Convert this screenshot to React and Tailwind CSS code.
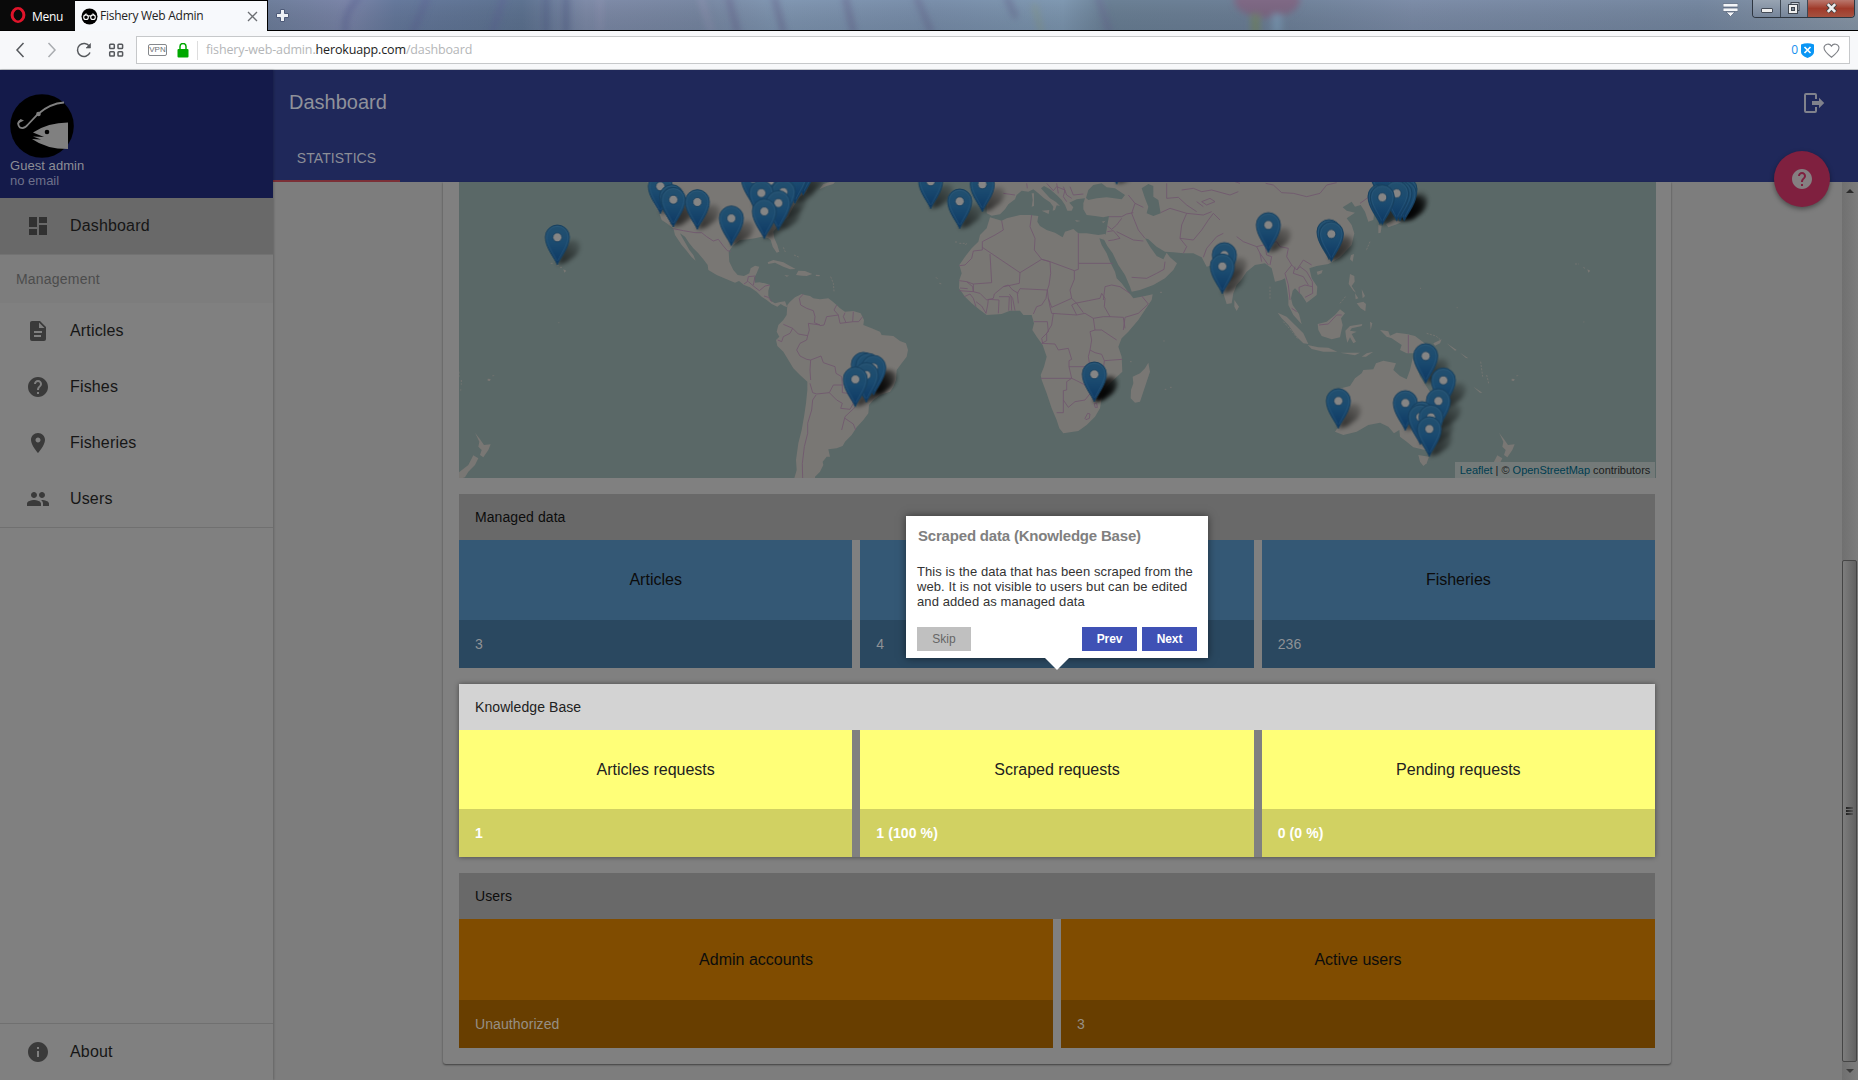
import React from "react";

const SANS = "font-['Liberation_Sans',Arial,sans-serif]";

const PATHS = {
  dashboard: "M3 13h8V3H3v10zm0 8h8v-6H3v6zm10 0h8V11h-8v10zm0-18v6h8V3h-8z",
  article:
    "M13 9h5.5L13 3.5V9M6 2h8l6 6v12a2 2 0 0 1-2 2H6a2 2 0 0 1-2-2V4c0-1.11.89-2 2-2m9 16v-2H8v2h7m1-4v-2H8v2h8z",
  help: "M12 2C6.48 2 2 6.48 2 12s4.48 10 10 10 10-4.48 10-10S17.52 2 12 2zm1 17h-2v-2h2v2zm2.07-7.75l-.9.92C13.45 12.9 13 13.5 13 15h-2v-.5c0-1.1.45-2.1 1.17-2.83l1.24-1.26c.37-.36.59-.86.59-1.41 0-1.1-.9-2-2-2s-2 .9-2 2H8c0-2.21 1.79-4 4-4s4 1.79 4 4c0 .88-.36 1.68-.93 2.25z",
  place:
    "M12 2C8.13 2 5 5.13 5 9c0 5.25 7 13 7 13s7-7.75 7-13c0-3.87-3.13-7-7-7zm0 9.5c-1.38 0-2.5-1.12-2.5-2.5s1.12-2.5 2.5-2.5 2.5 1.12 2.5 2.5-1.12 2.5-2.5 2.5z",
  people:
    "M16 11c1.66 0 2.99-1.34 2.99-3S17.66 5 16 5c-1.66 0-3 1.34-3 3s1.34 3 3 3zm-8 0c1.66 0 2.99-1.34 2.99-3S9.66 5 8 5C6.34 5 5 6.34 5 8s1.34 3 3 3zm0 2c-2.33 0-7 1.17-7 3.5V19h14v-2.5c0-2.33-4.67-3.5-7-3.5zm8 0c-.29 0-.62.02-.97.05 1.16.84 1.97 1.97 1.97 3.45V19h6v-2.5c0-2.33-4.67-3.5-7-3.5z",
  info: "M12 2C6.48 2 2 6.48 2 12s4.48 10 10 10 10-4.48 10-10S17.52 2 12 2zm1 15h-2v-6h2v6zm0-8h-2V7h2v2z",
  logout:
    "M17 17.25V14h-7v-4h7V6.75L22.25 12 17 17.25M13 2a2 2 0 0 1 2 2v4h-2V4H4v16h9v-4h2v4a2 2 0 0 1-2 2H4a2 2 0 0 1-2-2V4a2 2 0 0 1 2-2h9z",
};

function Icon({ name, className }) {
  return (
    <svg viewBox="0 0 24 24" className={className} fill="currentColor">
      <path d={PATHS[name]} />
    </svg>
  );
}

/* ---------- browser chrome ---------- */

function StripBackdrop() {
  return (
    <svg className="absolute inset-0 h-full w-full" viewBox="268 0 1590 30" preserveAspectRatio="none">
      <defs>
        <linearGradient id="strip" gradientUnits="userSpaceOnUse" x1="268" x2="1858" y1="0" y2="0">
          <stop offset="0" stopColor="#6f7f9c" />
          <stop offset="0.05" stopColor="#7b85a8" />
          <stop offset="0.08" stopColor="#66799c" />
          <stop offset="0.16" stopColor="#5e7391" />
          <stop offset="0.2" stopColor="#7f8ba8" />
          <stop offset="0.27" stopColor="#7988a3" />
          <stop offset="0.32" stopColor="#8197b2" />
          <stop offset="0.42" stopColor="#7a8fab" />
          <stop offset="0.5" stopColor="#7f98b1" />
          <stop offset="0.53" stopColor="#6b8095" />
          <stop offset="0.62" stopColor="#6d8097" />
          <stop offset="0.72" stopColor="#7d8da8" />
          <stop offset="0.9" stopColor="#7688a1" />
          <stop offset="1" stopColor="#8a98a8" />
        </linearGradient>
        <linearGradient id="stripShade" x1="0" x2="0" y1="0" y2="1">
          <stop offset="0" stopColor="#000" stopOpacity="0" />
          <stop offset="1" stopColor="#1e2c3c" stopOpacity="0.14" />
        </linearGradient>
        <filter id="soft" x="-20%" y="-20%" width="140%" height="140%">
          <feGaussianBlur stdDeviation="3" />
        </filter>
      </defs>
      <rect x="268" y="0" width="1590" height="30" fill="url(#strip)" />
      <g filter="url(#soft)" fill="none" strokeWidth="6" opacity="0.65">
        <path d="M360 -4Q342 14 346 34M428 -4L412 34M504 -4L492 34" stroke="#5f6796" />
        <path d="M546 -4V34M566 -4V34" stroke="#56648a" />
        <path d="M728 -4L738 34M774 -4L784 34M845 -4L854 34" stroke="#6a6c93" />
        <path d="M916 -4L932 34M1006 -4L1016 18M1098 -4L1110 34" stroke="#6b7094" />
        <path d="M600 -4V34M700 -4L712 34" stroke="#8d93b0" />
        <path d="M1034 4L1042 34" stroke="#869a93" />
      </g>
      <g filter="url(#soft)">
        <ellipse cx="1267" cy="0" rx="33" ry="18" fill="#7f6985" />
        <rect x="1251" y="14" width="9" height="22" fill="#75866f" />
        <rect x="1272" y="14" width="10" height="20" fill="#7c97b2" />
      </g>
      <rect x="268" y="0" width="1590" height="30" fill="url(#stripShade)" />
    </svg>
  );
}

function WindowButtons() {
  return (
    <div className="absolute right-[3px] top-0 flex h-[18px] w-[103px] overflow-hidden rounded-b-[4px] border border-t-0 border-[#2e3640]">
      <div className="flex w-[28px] items-center justify-center border-r border-[#3e4854] bg-gradient-to-b from-[#98a4b2] to-[#76859a]">
        <div className="mt-[4px] h-[5px] w-[12px] rounded-[1px] border border-[#444c57] bg-[#eee]" />
      </div>
      <div className="flex w-[27px] items-center justify-center border-r border-[#3e4854] bg-gradient-to-b from-[#98a4b2] to-[#76859a]">
        <svg className="mb-[2px]" width="14" height="14" viewBox="0 0 14 14" fill="none">
          <rect x="4" y="1.5" width="8" height="8" fill="#c8ced6" stroke="#3f4650" />
          <rect x="1.5" y="3.5" width="9" height="9" fill="#eee" stroke="#3f4650" />
          <rect x="4.5" y="6.5" width="3" height="3" fill="#7d8794" stroke="#3f4650" />
        </svg>
      </div>
      <div className="flex flex-1 items-center justify-center bg-gradient-to-b from-[#b9776d] via-[#a03a2a] to-[#a5513f]">
        <svg className="mb-[2px]" width="13" height="12" viewBox="0 0 13 12">
          <path d="M2.5 2l8 8M10.5 2l-8 8" stroke="#444" strokeWidth="4.4" />
          <path d="M2.8 2.2l7.4 7.6M10.2 2.2L2.8 9.8" stroke="#eee" strokeWidth="2.6" />
        </svg>
      </div>
    </div>
  );
}

function TabStrip() {
  return (
    <div className="flex h-[31px] border-b border-black bg-black">
      <div className="flex w-[75px] items-center bg-[#0a0a0a] pl-[10px]">
        <svg width="16" height="16" viewBox="0 0 16 16">
          <ellipse cx="8" cy="8" rx="5.9" ry="6.4" fill="none" stroke="#e0142a" strokeWidth="3" />
          <ellipse cx="8" cy="8" rx="3.6" ry="5.6" fill="#0a0a0a" />
        </svg>
        <span className="ml-[6px] mt-[3px] text-[12px] tracking-[-0.3px] text-white">Menu</span>
      </div>
      <div className="mt-px mb-[-1px] flex w-[192px] items-center bg-[#f7f9fc]">
        <svg className="ml-[6px]" width="17" height="17" viewBox="0 0 17 17">
          <circle cx="8.5" cy="8.5" r="8" fill="#000" />
          <g fill="none" stroke="#fff" strokeWidth="1.1">
            <circle cx="5" cy="9.2" r="2.3" />
            <circle cx="12" cy="9.2" r="2.3" />
            <path d="M7.2 8.2q1.3-1 2.6 0M4.2 6.8l1.2-1.3M12.8 6.8l-1.2-1.3" />
          </g>
        </svg>
        <span className="ml-[2px] w-[132px] whitespace-nowrap text-[12px] tracking-[-0.26px] text-[#222]">Fishery Web Admin</span>
        <svg className="ml-[15px]" width="11" height="11" viewBox="0 0 11 11">
          <path d="M1 1l9 9M10 1l-9 9" stroke="#6b6e73" strokeWidth="1.3" />
        </svg>
      </div>
      <div className="relative ml-px flex-1 overflow-hidden">
        <StripBackdrop />
        <svg className="absolute left-[8px] top-[9px]" width="13" height="13" viewBox="0 0 13 13">
          <path d="M4.5 .5h4v4h4v4h-4v4h-4v-4h-4v-4h4z" fill="#eef1f6" stroke="#4d5a78" />
        </svg>
        <svg className="absolute right-[120px] top-[3px]" width="15" height="14" viewBox="0 0 15 14">
          <path d="M0 .5h15v3.5H0zM0 5h15v3.500H0zM3 9h9l-4.500 4.500z" fill="#f3f5f8" stroke="#5d6b80" strokeWidth=".8" />
        </svg>
        <WindowButtons />
      </div>
    </div>
  );
}

function AddressBar() {
  return (
    <div className="flex h-[39px] items-center border-b border-[#c3c6c9] bg-[#f7f8fa]">
      <svg className="ml-[14px] shrink-0" width="112" height="18" viewBox="14 0 112 18" fill="none" stroke="#55585c" strokeWidth="1.5">
        <path d="M23.500 2L17 9l6.500 7" />
        <path d="M48.500 2L55 9l-6.500 7" stroke="#a9acb0" />
        <path d="M89.500 5.500A6.500 6.500 0 1 0 90 11.500" />
        <path d="M90.500 2.500v4.500h-4.500z" fill="#55585c" strokeWidth=".6" />
        <rect x="109.700" y="3.200" width="4.600" height="4.300" rx=".8" />
        <rect x="118" y="3.200" width="4.600" height="4.300" rx=".8" />
        <rect x="109.700" y="10.700" width="4.600" height="4.300" rx=".8" />
        <rect x="118" y="10.700" width="4.600" height="4.300" rx=".8" />
      </svg>
      <div className="ml-[10px] mr-[8px] flex h-[28px] flex-1 items-center border border-[#c6c8ca] bg-white">
        <span className={`ml-[11px] flex h-[12px] w-[19px] items-center justify-center rounded-[2px] border border-[#85888c] text-[8px] text-[#6c6f73] ${SANS}`}>
          <span>VPN</span>
        </span>
        <svg className="ml-[10px]" width="12" height="15" viewBox="0 0 12 15">
          <path d="M3 7V3.500a3 3 0 0 1 6 0V7" fill="none" stroke="#00a800" strokeWidth="1.500" />
          <rect x=".5" y="6" width="11" height="8.500" rx="1" fill="#00a800" />
        </svg>
        <span className="ml-[8px] h-[19px] w-px bg-[#ddd]" />
        <span className="ml-[8px] flex-1 whitespace-nowrap text-[12.500px] tracking-[-0.14px] text-[#b4b6b8]">
          fishery-web-admin.<span className="text-[#222]">herokuapp.com</span>/dashboard
        </span>
        <span className="text-[12px] text-[#1590ee]">0</span>
        <svg className="ml-[3px]" width="13" height="15" viewBox="0 0 13 15">
          <path d="M0 1.500Q6.500-1 13 1.500V9q0 3.500-6.500 6Q0 12.500 0 9z" fill="#0a96f5" />
          <path d="M3.500 4l6 6M9.500 4l-6 6" stroke="#fff" strokeWidth="1.700" />
        </svg>
        <svg className="ml-[9px] mr-[9px]" width="17" height="15" viewBox="0 0 17 15">
          <path d="M8.500 14.200Q1 8.500 1 4.800A4 4 0 0 1 8.500 3.200 4 4 0 0 1 16 4.800Q16 8.500 8.500 14.200z" fill="none" stroke="#808388" strokeWidth="1.100" />
        </svg>
      </div>
    </div>
  );
}

/* ---------- sidebar ---------- */

function Avatar() {
  return (
    <svg width="64" height="64" viewBox="0 0 64 64" className="block">
      <circle cx="32" cy="32" r="31.800" fill="#000" />
      <path d="M23 42.500L34 43 23 38.500Q38 28.500 58 28.500V55Q36 55 22 45L31 45.500z" fill="#808080" />
      <circle cx="37" cy="38" r="2.300" fill="#000" />
      <path d="M54 8.500Q40 9.500 28 20L18 30.500Q14 35.500 10 33.500 6.500 30 10 26.500" fill="none" stroke="#808080" strokeWidth="1.800" />
      <circle cx="28.500" cy="20" r="2.300" fill="#808080" />
      <path d="M7 30l3.500-5 3.500 1.500z" fill="#808080" />
    </svg>
  );
}

function NavItem({ icon, label, active }) {
  return (
    <div className={active ? "flex h-[56px] items-center bg-[#696969] pl-[26px]" : "flex h-[56px] items-center pl-[26px]"}>
      <Icon name={icon} className={active ? "h-6 w-6 text-[#313131]" : "h-6 w-6 text-[#3a3a3a]"} />
      <span className="ml-[20px] text-[16px] tracking-[0.16px] text-[#161616]">{label}</span>
    </div>
  );
}

const MANAGEMENT = [
  ["article", "Articles"],
  ["help", "Fishes"],
  ["place", "Fisheries"],
  ["people", "Users"],
];

function Sidebar() {
  return (
    <aside className="relative z-10 flex w-[273px] shrink-0 flex-col bg-[#808080] shadow-[1px_0_2px_rgba(0,0,0,0.2)]">
      <div className="h-[128px] bg-[#141a4a] pl-[10px] pt-[24px] text-[13px] leading-[15px]">
        <Avatar />
        <div className="tracking-[0.05px] text-[#8d8e96]">Guest admin</div>
        <div className="text-[#6e718b]">no email</div>
      </div>
      <NavItem icon="dashboard" label="Dashboard" active />
      <div className="flex h-[49px] items-center border-t border-[#727272] bg-[#7d7d7d] pl-4 text-[14px] tracking-[0.2px] text-[#4c4c4c]">
        Management
      </div>
      {MANAGEMENT.map(([icon, label]) => (
        <NavItem key={label} icon={icon} label={label} />
      ))}
      <div className="border-t border-[#707070]" />
      <div className="mt-auto border-t border-[#707070]">
        <NavItem icon="info" label="About" />
      </div>
    </aside>
  );
}

/* ---------- map ---------- */

// Tip positions in thirds of a pixel, measured from the map's own origin group.
const MARKERS = [
  [1090, 75], [1065, 100], [940, 108], [990, 115], [661, 131], [1030, 148], [964, 151], [695, 163],
  [700, 171], [772, 178], [1015, 181], [973, 206], [874, 227], [352, 284],
  [1472, 116], [1627, 125], [1559, 176], [2030, 42], [2353, 337], [2347, 371], [1963, 695],
  [1270, 666], [1284, 669], [1301, 675], [1279, 697], [1246, 710],
  [2485, 247], [2667, 268], [2674, 274], [2826, 90], [2895, 140], [2893, 152], [2880, 152], [2870, 152],
  [2820, 162], [2827, 164],
  [2957, 640], [3010, 713], [2695, 775], [2995, 775], [2896, 781], [2946, 814], [2973, 824], [2941, 823], [2968, 859],
];

const HEAVY_SHADOWS = [[1963, 695], [1963, 693], [2893, 152], [2880, 152], [1301, 675]];

const LAND = [
  // North and Central America
  "M618 20L630 60 640 100 658 130 665 150 680 160 700 175 705 195 715 210 725 225 738 240 755 262 767 272 760 255 748 240 738 222 728 205 720 190 735 200 748 220 760 235 775 250 790 268 803 285 805 300 830 315 860 328 885 338 897 333 912 345 930 352 950 365 965 380 980 390 995 402 1012 410 1022 402 1032 408 1042 412 1035 394 1020 396 1005 400 992 392 985 378 985 362 990 345 975 340 958 337 945 338 942 325 950 310 958 290 945 287 932 295 928 310 912 318 893 315 880 300 868 275 866 245 880 225 900 210 925 208 945 205 965 200 985 205 992 210 998 230 1010 248 1018 245 1012 225 1003 205 1000 185 1020 160 1045 140 1060 110 1080 80 1100 65 1115 20z",
  "M1138 58L1150 42 1190 30 1180 42 1160 48z",
  "M983 277L1000 270 1030 277 1050 288 1067 297 1050 298 1030 290 1005 278 985 282z",
  "M1068 315L1075 302 1095 303 1117 312 1100 318 1085 317zM1033 315L1048 317 1040 320zM1127 314L1140 315 1138 319 1128 318z",
  // South America
  "M1042 405L1050 395 1065 382 1085 372 1095 375 1110 378 1120 385 1140 388 1165 385 1175 392 1190 405 1200 415 1215 425 1240 423 1262 430 1272 450 1270 465 1295 475 1320 485 1325 495 1360 498 1380 513 1398 520 1404 540 1400 560 1385 580 1370 600 1368 630 1360 650 1350 665 1320 675 1300 690 1287 705 1285 730 1270 750 1250 772 1235 795 1215 815 1208 828 1190 835 1165 838 1170 860 1160 860 1148 875 1150 885 1140 905 1125 920 1125 935 1060 935 1070 900 1068 870 1075 820 1085 780 1092 740 1098 700 1102 660 1102 635 1080 615 1060 595 1045 570 1030 545 1012 528 1008 510 1018 500 1010 485 1015 465 1030 450 1040 435z",
  // New Zealand, shown once on each side of the date line
  "M105 788L120 808 132 825 152 823 145 840 130 862 120 855 125 840 115 830 118 815zM100 856L115 865 105 885 85 905 75 922 55 928 50 912 85 885z",
  "M3177 788L3192 808 3204 825 3224 823 3217 840 3202 862 3192 855 3197 840 3187 830 3190 815zM3172 856L3187 865 3177 885 3157 905 3147 922 3127 928 3122 912 3157 885z",
  "M143 626L152 627 150 633 143 632zM155 618L164 615 160 619zM370 298L379 302 373 308zM350 284L356 284 355 288zM3215 626L3224 627 3222 633 3215 632zM3227 618L3236 615 3232 619zM3442 298L3451 302 3445 308zM3420 286L3428 288z",
  // Africa
  "M1650 142L1685 152 1700 145 1740 135 1770 135 1795 138 1792 155 1800 168 1820 180 1845 188 1868 202 1875 185 1900 177 1915 190 1940 190 1975 195 1995 192 2000 212 1978 205 1985 225 2000 250 2010 275 2025 305 2030 325 2045 340 2060 360 2075 378 2080 385 2115 378 2138 373 2135 390 2115 420 2095 450 2065 485 2045 505 2035 530 2045 560 2047 605 2020 630 2000 650 1990 670 1983 695 1980 715 1965 740 1940 765 1915 783 1870 790 1858 775 1850 750 1835 715 1820 670 1805 630 1802 615 1812 590 1820 560 1808 525 1790 500 1777 480 1782 460 1775 435 1750 435 1740 422 1710 422 1685 432 1640 435 1620 420 1595 400 1575 380 1557 355 1558 330 1565 310 1558 285 1575 260 1595 235 1615 215 1620 195 1640 175z",
  "M2125 578L2130 605 2115 650 2100 695 2085 698 2072 685 2073 660 2080 640 2078 620 2100 610 2115 595z",
  // Eurasia, with the Black Sea and the Caspian cut out
  "M1640 20L1645 70 1640 100 1640 130 1655 137 1680 133 1695 118 1705 103 1725 88 1730 75 1745 62 1765 65 1780 58 1795 70 1812 85 1830 97 1840 110 1838 122 1845 120 1850 106 1860 108 1848 96 1830 85 1815 68 1803 55 1812 48 1830 58 1850 75 1865 90 1875 105 1882 122 1895 122 1900 112 1888 98 1910 88 1935 85 1930 100 1930 118 1940 135 1965 138 1990 142 2007 138 2002 165 1998 190 1990 205 2002 228 2018 250 2035 285 2055 315 2070 350 2075 365 2100 360 2140 345 2175 325 2200 300 2211 280 2190 262 2180 248 2170 268 2150 258 2130 230 2115 205 2125 208 2150 230 2175 245 2200 247 2230 250 2260 250 2285 262 2300 290 2320 285 2335 330 2350 370 2360 402 2375 400 2380 370 2390 345 2405 328 2420 305 2445 285 2475 280 2495 295 2505 335 2525 330 2535 325 2540 350 2545 385 2545 405 2560 435 2585 463 2577 432 2558 405 2553 385 2558 362 2565 355 2585 375 2600 398 2630 375 2632 350 2615 325 2608 295 2630 288 2665 282 2700 262 2735 225 2743 190 2735 165 2720 145 2745 128 2720 122 2708 112 2735 95 2745 110 2762 105 2775 125 2785 155 2800 150 2805 110 2810 20zM1938 84L1945 60 1960 45 1985 40 2000 52 2025 55 2055 75 2045 88 2000 82 1970 85 1945 90zM2105 55L2125 42 2140 48 2140 80 2155 90 2162 130 2140 138 2120 130 2125 110 2115 85z",
  "M1775 70L1782 70 1782 108 1775 110 1778 90zM1805 122L1828 120 1826 132zM1905 150L1922 153 1910 155zM1985 155L1997 152 1990 159z",
  "M2383 390L2397 410 2390 423 2383 410zM2630 305L2648 300 2645 310 2633 315zM2733 255L2742 252 2738 275 2730 268zM2815 165L2825 168 2822 188 2815 190zM2838 162L2860 150 2885 155 2872 162 2845 172z",
  // South-east Asia
  "M2513 428L2540 440 2565 465 2590 490 2605 522 2590 520 2570 500 2545 465 2525 445zM2603 525L2635 532 2665 533 2692 545 2650 545 2615 537zM2633 462L2660 455 2685 435 2700 418 2715 430 2703 445 2708 465 2700 502 2675 508 2645 498 2635 480z",
  "M2716 482L2730 468 2767 462 2765 468 2735 475 2730 482 2750 485 2735 492 2748 515 2740 520 2730 502 2722 518 2718 500zM2730 312L2743 318 2744 335 2735 348 2748 368 2740 362 2726 342zM2750 400L2770 395 2778 402 2776 424 2762 415zM2745 370L2755 385 2747 388zM2765 358L2775 378 2768 385zM2790 455L2797 460 2792 480zM2700 548L2760 548 2745 556zM2765 560L2780 550 2800 545 2778 560z",
  // Papua, Australia and nearby islands
  "M2820 480L2845 484 2850 497 2870 488 2900 492 2925 498 2948 515 2965 530 2975 560 2955 560 2930 550 2900 550 2880 540 2885 525 2855 505 2840 500zM2980 520L3005 508 3000 520 2985 527zM3020 520L3050 540 3045 542zM3060 548L3085 565 3078 564zM3100 650L3127 668 3120 668z",
  "M2703 655L2730 648 2745 625 2765 610 2770 600 2800 598 2808 580 2830 572 2868 580 2860 600 2880 618 2900 628 2910 600 2918 565 2930 590 2940 620 2960 650 2980 680 3000 710 3010 740 3005 780 2990 820 2955 840 2920 832 2900 815 2880 800 2878 780 2862 790 2845 770 2820 758 2785 765 2750 785 2710 795 2685 785 2695 770 2685 740 2675 700 2685 670z",
  "M2935 855L2967 860 2960 880 2950 888 2940 875z",
];

const BORDERS =
  "M700 176L730 182 765 188 785 188 800 200 820 213 835 208 850 228 862 242 872 244M912 342L922 335 925 320 945 318M925 335L945 352 958 362 975 348 990 345M945 320L940 345M972 378L985 382 995 395" +
  "M1090 372L1078 385 1082 405 1100 415 1120 422 1125 440 1123 458 1140 465 1105 460 1108 480 1103 497M1030 463L1058 475 1075 492 1103 497 1100 510 1080 520 1070 540 1080 558 1100 568 1112 570 1110 600 1112 630M1058 475L1050 490 1030 500 1025 515 1013 510M1112 570L1143 558 1150 578 1185 590 1188 610 1205 620 1207 645 1180 645 1168 668 1130 672 1118 668 1110 640" +
  "M1128 675L1118 690 1115 720 1103 760 1103 790 1093 830 1087 880 1088 930M1168 668L1190 690 1207 700 1202 715 1230 718 1240 700 1225 670 1207 668 1207 645M1245 712L1215 740 1205 780M1215 745L1240 762 1247 780M1190 405L1182 420 1195 435 1160 440 1152 465 1140 467M1195 435L1200 460 1240 455 1256 455 1268 440M1215 428L1210 440 1218 458M1240 425L1238 455" +
  "M1685 152L1690 180 1665 195 1627 215 1627 240 1600 243 1595 265 1575 285 1558 287M1627 232L1740 308 1805 268 1783 240 1785 205 1770 170 1775 135M1650 252L1655 338 1600 342 1580 335M1740 308L1738 340 1715 345 1690 350 1663 372 1660 385 1640 390 1620 370 1600 365 1600 342M1805 268L1830 275 1903 302 1903 328 1890 360 1895 385 1835 412 1825 385 1822 360 1827 345 1832 310 1830 275M1915 190L1915 280 2018 280M1915 280L1915 298 1903 302M1805 268L1830 275" +
  "M1558 332L1580 335 1598 350 1600 365 1558 362M1560 354L1583 356M1573 380L1590 372 1600 385 1608 410M1608 395L1625 408 1638 430M1645 388L1643 405 1638 430M1645 388L1677 390 1675 430M1677 380L1708 380 1706 422M1713 378L1715 422M1708 372L1718 385 1725 422M1735 400L1732 370 1740 356 1822 360 1818 385 1805 405 1790 410 1780 432M1690 350L1705 345 1718 360 1735 370" +
  "M1825 385L1830 410 1835 430 1865 432 1910 435 1935 430 1960 445 1990 440 2010 440 2050 442 2055 475M1782 455L1822 455 1825 485 1805 505 1808 520M1840 430L1835 465 1820 490 1820 512 1805 520 1845 522 1855 540 1885 535 1895 568 1887 572 1887 590M1910 435L1895 405 1905 400 1945 392 1980 385 1985 370 1995 385 1993 410 2010 440M1895 385L1910 400 1930 428M1990 390L1995 350 2015 345 2040 350 2070 370M2105 378L2125 402 2095 430 2055 442 2050 480" +
  "M1960 445L1965 480 1950 485 1955 510 1950 540 1965 548 1985 553 1993 572 2047 568M1965 480L1985 480 2030 510M1887 590L1895 625 1802 625M1887 590L1950 590 1945 560 1950 540M1895 625L1880 635 1880 660 1870 662 1870 728 1850 728M1870 690L1885 712 1905 695 1935 690 1955 665 1935 645 1910 632 1895 625M1993 572L1990 600 1965 605 1935 628M1935 745L1943 730 1950 732 1948 745 1938 749zM1963 700L1970 700 1972 712 1965 712z" +
  "M2007 140L2045 140 2060 132 2080 128M2002 168L2015 178 2030 165 2045 145M2002 185L2020 182 2040 205 2020 210 2005 212M2030 185L2080 210 2110 213M2075 322L2120 325 2150 310 2172 298 2175 275M2115 205L2095 180 2085 155 2075 130 2085 100 2065 75M2085 100L2110 112M2162 128L2190 115 2240 130 2225 165 2220 205 2240 230 2230 250M2240 130L2290 135 2315 125M2220 205L2260 210 2285 180 2305 150 2320 130 2340 150M2290 262L2300 235 2330 200 2350 190M2180 85L2180 40M2180 85L2215 82 2240 105 2270 125M2225 60L2260 55 2285 65 2315 60 2370 75 2395 65M2285 95L2310 85 2325 95 2300 105zM2270 95L2290 110" +
  "M1820 40L1840 62 1850 50 1875 60 1870 80 1880 95M1850 40L1855 70M1890 50L1900 75 1930 72M1870 50L1880 75 1895 85M1690 70L1725 75M1760 40L1762 55M2340 20L2400 40" +
  "M2390 200L2410 215 2450 230 2460 250 2485 285M2450 230L2510 215 2520 230 2545 235 2540 260 2555 285M2460 250L2465 275M2475 225L2480 255 2495 260 2490 285M2555 285L2535 310 2545 345 2550 390M2555 285L2570 300 2590 270 2615 285M2565 290L2560 310 2590 320 2605 345M2570 300L2580 290 2600 305 2617 335 2618 370 2595 382M2577 352L2595 345 2617 350M2577 352L2578 370M2637 465L2665 462 2690 435 2705 435M2477 40L2500 45 2525 68 2560 70 2600 80 2640 70 2660 45 2690 38M2760 100L2785 82M2905 495V550M2555 415L2570 425";

const ISLETS =
  "M332 280h6M360 292h8M57 605v20M64 630v14M60 660h4M355 458h3M1030 232l6 14M1062 255l14 6M1172 320l8 20 2 24M1545 216h6M1558 220h16M1576 224l8 -6M1488 322l6 6M1498 340l8 2M2160 367h6M2070 575h5M2170 513h4M2174 658h5M2190 652h5M2490 350v36M2530 455l20 22 24 30M2790 215l-12 28M2960 490l28 8 14 12M3122 575l6 45M3140 615l6 25M3405 282h12M3430 292l8 5M2700 400l18 -22M2940 355h3M3050 413h3M3430 456h3";

function WorldMap() {
  const markers = [...MARKERS].sort((a, b) => a[1] - b[1]);
  return (
    <div className="relative h-[296px] w-[1197px] overflow-hidden bg-[#5a6867]">
      <svg width="1197" height="296" viewBox="57 36 3591 888" className="block">
        <defs>
          <linearGradient id="pin" x1="0" x2="0" y1="0" y2="1">
            <stop offset="0" stopColor="#23506f" />
            <stop offset="0.450" stopColor="#1b4b70" />
            <stop offset="1" stopColor="#0c3763" />
          </linearGradient>
          <linearGradient id="shadeFade" gradientUnits="userSpaceOnUse" x1="8" x2="70" y1="0" y2="-72">
            <stop offset="0" stopColor="#000" stopOpacity="1" />
            <stop offset="0.500" stopColor="#000" stopOpacity="0.650" />
            <stop offset="1" stopColor="#000" stopOpacity="0.150" />
          </linearGradient>
          <filter id="pinBlur" x="-50%" y="-50%" width="200%" height="200%">
            <feGaussianBlur stdDeviation="7" />
          </filter>
          <g id="marker">
            <path
              d="M0 0C-8 -20 -36 -50 -36 -83A36 36 0 0 1 36 -83C36 -50 8 -20 0 0z"
              fill="url(#pin)"
              stroke="#17405f"
              strokeWidth="3"
            />
            <path d="M-2 -12C-12 -34 -32 -60 -32 -83A32 32 0 0 1 32 -83C32 -60 12 -34 2 -12" fill="none" stroke="#366284" strokeWidth="2.500" opacity="0.500" />
            <circle cx="0" cy="-82" r="13.500" fill="#858585" stroke="#163d5d" strokeWidth="2.500" />
          </g>
          <path id="markerShadow" d="M0 0L16 -50Q36 -82 60 -72 78 -56 54 -26L26 -6z" fill="url(#shadeFade)" />
        </defs>
        <g fill="#797774" fillRule="evenodd">
          {LAND.map((d, i) => (
            <path key={i} d={d} />
          ))}
        </g>
        <path d={ISLETS} fill="none" stroke="#777672" strokeWidth="2.500" strokeDasharray="6 4" />
        <path d={BORDERS} fill="none" stroke="#70586e" strokeWidth="2.600" strokeLinejoin="round" />
        <g filter="url(#pinBlur)" opacity="0.620">
          {markers.map(([x, y], i) => (
            <use key={i} href="#markerShadow" x={x} y={y} />
          ))}
        </g>
        <g filter="url(#pinBlur)" opacity="0.950">
          {HEAVY_SHADOWS.map(([x, y], i) => (
            <use key={i} href="#markerShadow" x={x} y={y} />
          ))}
        </g>
        {markers.map(([x, y], i) => (
          <use key={i} href="#marker" x={x} y={y} />
        ))}
      </svg>
      <div className="absolute bottom-0 right-px flex h-[16px] w-[200px] items-center justify-center whitespace-nowrap bg-[#747a79] text-[11px] tracking-[-0.02px] text-[#1c1c1c]">
        <span>
          <span className="text-[#003d50]">Leaflet</span> | © <span className="text-[#003d50]">OpenStreetMap</span> contributors
        </span>
      </div>
    </div>
  );
}

/* ---------- statistics ---------- */

function StatSection({ title, tiles, cols, head, body, foot, bodyH, footText, titleText, className = "" }) {
  return (
    <section className={`w-[1196px] ${className}`}>
      <div className={`flex h-[46px] items-center pl-4 text-[14px] tracking-[0.08px] ${head} ${titleText}`}>{title}</div>
      <div className={`grid gap-2 ${cols}`}>
        {tiles.map(([label, value]) => (
          <div key={value}>
            <div className={`flex items-center justify-center text-[16px] ${bodyH} ${body} ${titleText}`}>
              {label}
            </div>
            <div className={`flex h-[48px] items-center pl-4 text-[14px] tracking-[0.1px] ${foot} ${footText}`}>{value}</div>
          </div>
        ))}
      </div>
    </section>
  );
}

function Tour() {
  return (
    <div className="absolute bottom-[199px] left-[447px] z-20 h-[142px] w-[302px] bg-white px-[11px] shadow-[0_0_8px_rgba(0,0,0,0.5)]">
      <h4 className="ml-px whitespace-nowrap pt-[11px] text-[15px] font-bold leading-[18px] tracking-[-0.19px] text-[#808080]">
        Scraped data (Knowledge Base)
      </h4>
      <p className="mt-[19px] whitespace-nowrap text-[13px] leading-[15px] tracking-[0.09px] text-[#333]">
        This is the data that has been scraped from the
        <br />
        web. It is not visible to users but can be edited
        <br />
        and added as managed data
      </p>
      <div className="mt-[18px] flex h-[24px] text-[12px]">
        <button className="w-[54px] bg-[#c0c0c0] text-[#666]">Skip</button>
        <button className="ml-auto w-[55px] bg-[#3f51b5] font-bold tracking-[-0.1px] text-white">Prev</button>
        <button className="ml-[5px] w-[55px] bg-[#3f51b5] font-bold tracking-[-0.1px] text-white">Next</button>
      </div>
      <svg className="absolute left-[139px] top-full" width="24" height="12" viewBox="0 0 24 12">
        <path d="M0 0h24L12 12z" fill="#fff" />
      </svg>
    </div>
  );
}

function Scrollbar() {
  return (
    <div className="flex w-4 flex-col items-center bg-gradient-to-r from-[#707070] to-[#7c7c7c]">
      <svg className="mt-[7px]" width="8" height="4" viewBox="0 0 8 4">
        <path d="M0 4L4 0l4 4z" fill="#2b2b2b" />
      </svg>
      <div className="mt-[367px] flex h-[502px] w-[15px] flex-col items-center justify-center gap-px self-start rounded-[2px] border border-[#454545] bg-gradient-to-r from-[#7d7d7d] via-[#6f6f6f] to-[#616161]">
        <div className="h-[2px] w-[7px] bg-gradient-to-r from-[#222] to-[#555]" />
        <div className="h-[2px] w-[7px] bg-gradient-to-r from-[#222] to-[#555]" />
        <div className="h-[2px] w-[7px] bg-gradient-to-r from-[#222] to-[#555]" />
      </div>
      <svg className="mt-[7px]" width="8" height="4" viewBox="0 0 8 4">
        <path d="M0 0h8L4 4z" fill="#3c3c3c" />
      </svg>
    </div>
  );
}

function Main() {
  return (
    <main className="relative flex min-w-0 flex-1 flex-col bg-[#7d7d7d]">
      <header className="relative flex h-[112px] shrink-0 flex-col justify-between bg-[#1f285a]">
        <div className="flex h-[65px] items-center justify-between pl-4 pr-[32px]">
          <h1 className="mb-[2px] text-[20px] text-[#8f919a]">Dashboard</h1>
          <Icon name="logout" className="h-6 w-6 text-[#80828c]" />
        </div>
        <div className="flex h-[47px] w-[127px] items-center justify-center border-b-2 border-[#7b3037] pt-[2px] text-[14px] tracking-[0.05px] text-[#8c8e97]">
          STATISTICS
        </div>
        <div className="absolute bottom-[-25px] right-[28px] z-20 flex h-[56px] w-[56px] items-center justify-center rounded-full bg-[#7f203f] shadow-[0_2px_5px_rgba(0,0,0,0.4)]">
          <Icon name="help" className="h-6 w-6 text-[#857f81]" />
        </div>
      </header>
      <div className="flex flex-1">
        <div className="flex-1">
          <div className="relative ml-[170px] flex h-[882px] w-[1228px] flex-col gap-4 rounded-b-[3px] bg-[#808080] pl-4 shadow-[0_1px_2px_rgba(0,0,0,0.5)]">
            <WorldMap />
            <StatSection
              title="Managed data"
              tiles={[["Articles", "3"], ["", "4"], ["Fisheries", "236"]]}
              cols="grid-cols-3"
              head="bg-[#696969]"
              body="bg-[#345875]"
              bodyH="h-[80px]"
              foot="bg-[#2a4860]"
              titleText="text-[#0c0c0c]"
              footText="text-[#8e9296]"
            />
            <div className="relative">
              <StatSection
                title="Knowledge Base"
                tiles={[["Articles requests", "1"], ["Scraped requests", "1 (100 %)"], ["Pending requests", "0 (0 %)"]]}
                cols="grid-cols-3"
                head="bg-[#d3d3d3]"
                body="bg-[#ffff78]"
                bodyH="h-[79px]"
                foot="bg-[#d1d162]"
                titleText="text-[#212121]"
                footText="font-bold text-white"
                className="shadow-[0_0_5px_rgba(0,0,0,0.45)] bg-[#808080]"
              />
              <Tour />
            </div>
            <StatSection
              title="Users"
              tiles={[["Admin accounts", "Unauthorized"], ["Active users", "3"]]}
              cols="grid-cols-2"
              head="bg-[#696969]"
              body="bg-[#804c00]"
              bodyH="h-[81px]"
              foot="bg-[#683e00]"
              titleText="text-[#0c0c0c]"
              footText="text-[#968f85]"
            />
          </div>
        </div>
        <Scrollbar />
      </div>
    </main>
  );
}

export default function App() {
  return (
    <div className="flex h-[1080px] w-[1858px] flex-col overflow-hidden">
      <div className="font-['Open_Sans','Noto_Sans',sans-serif]">
        <TabStrip />
        <AddressBar />
      </div>
      <div className={`flex min-h-0 flex-1 ${SANS}`}>
        <Sidebar />
        <Main />
      </div>
    </div>
  );
}
